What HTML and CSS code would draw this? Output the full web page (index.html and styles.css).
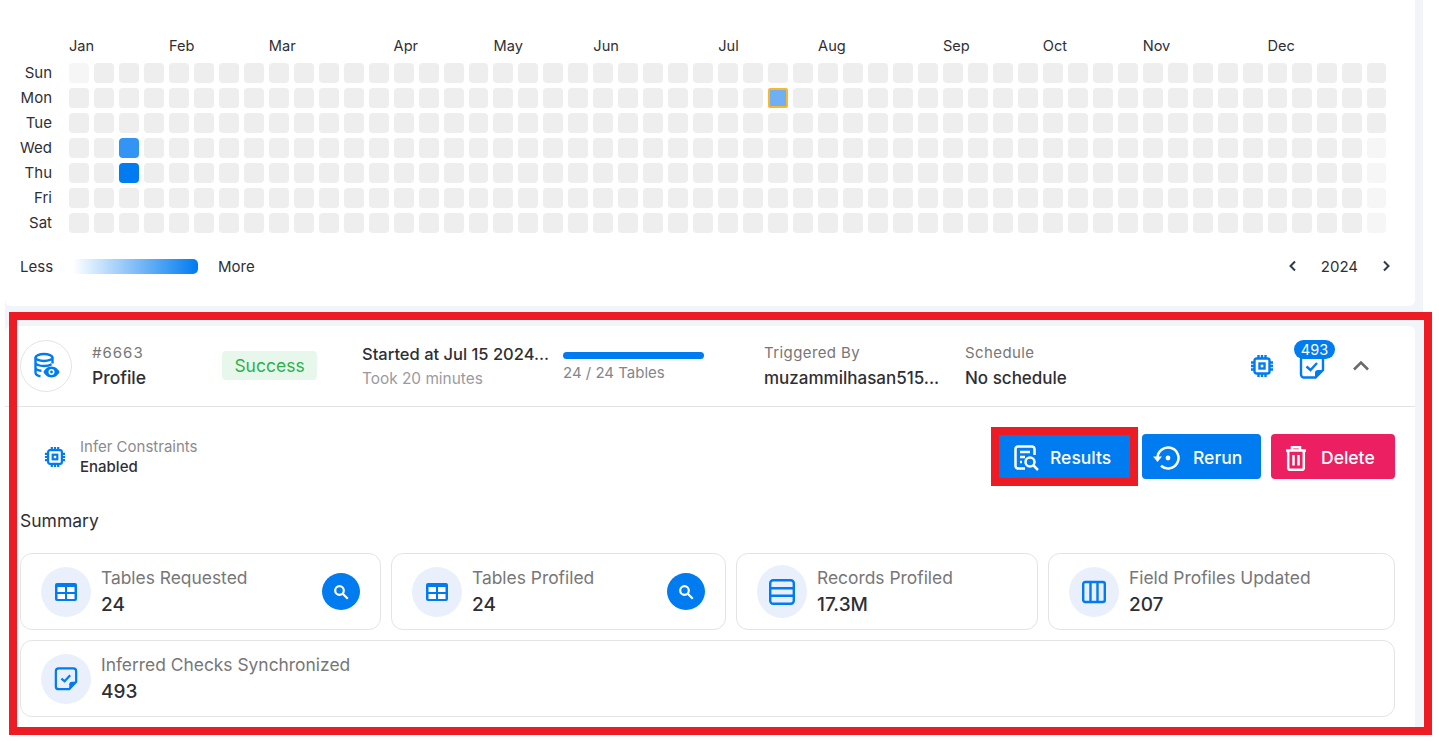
FILE: index.html
```html
<!DOCTYPE html>
<html lang="en">
<head>
<meta charset="utf-8">
<title>Profile operation</title>
<link rel="stylesheet" href="styles.css">
</head>
<body>
<main class="page">
  <section class="calendar">
    <div class="heat">
      <div class="days">
        <span>Sun</span><span>Mon</span><span>Tue</span><span>Wed</span><span>Thu</span><span>Fri</span><span>Sat</span>
      </div>
      <div class="plot">
        <div class="months">
          <span class="m0">Jan</span><span class="m4">Feb</span><span class="m8">Mar</span><span class="m13">Apr</span><span class="m17">May</span><span class="m21">Jun</span><span class="m26">Jul</span><span class="m30">Aug</span><span class="m35">Sep</span><span class="m39">Oct</span><span class="m43">Nov</span><span class="m48">Dec</span>
        </div>
        <div class="cells">
          <i class="off"></i><i></i><i></i><i></i><i></i><i></i><i></i><i></i><i></i><i></i>
          <i></i><i></i><i></i><i></i><i></i><i></i><i></i><i></i><i></i><i></i>
          <i></i><i></i><i></i><i></i><i></i><i></i><i></i><i></i><i></i><i></i>
          <i></i><i></i><i></i><i></i><i></i><i></i><i></i><i></i><i></i><i></i>
          <i></i><i></i><i></i><i></i><i></i><i></i><i></i><i></i><i></i><i></i>
          <i></i><i></i><i></i>

          <i></i><i></i><i></i><i></i><i></i><i></i><i></i><i></i><i></i><i></i>
          <i></i><i></i><i></i><i></i><i></i><i></i><i></i><i></i><i></i><i></i>
          <i></i><i></i><i></i><i></i><i></i><i></i><i></i><i></i><i class="picked"></i><i></i>
          <i></i><i></i><i></i><i></i><i></i><i></i><i></i><i></i><i></i><i></i>
          <i></i><i></i><i></i><i></i><i></i><i></i><i></i><i></i><i></i><i></i>
          <i></i><i></i><i></i>

          <i></i><i></i><i></i><i></i><i></i><i></i><i></i><i></i><i></i><i></i>
          <i></i><i></i><i></i><i></i><i></i><i></i><i></i><i></i><i></i><i></i>
          <i></i><i></i><i></i><i></i><i></i><i></i><i></i><i></i><i></i><i></i>
          <i></i><i></i><i></i><i></i><i></i><i></i><i></i><i></i><i></i><i></i>
          <i></i><i></i><i></i><i></i><i></i><i></i><i></i><i></i><i></i><i></i>
          <i></i><i></i><i></i>

          <i></i><i></i><i class="mid"></i><i></i><i></i><i></i><i></i><i></i><i></i><i></i>
          <i></i><i></i><i></i><i></i><i></i><i></i><i></i><i></i><i></i><i></i>
          <i></i><i></i><i></i><i></i><i></i><i></i><i></i><i></i><i></i><i></i>
          <i></i><i></i><i></i><i></i><i></i><i></i><i></i><i></i><i></i><i></i>
          <i></i><i></i><i></i><i></i><i></i><i></i><i></i><i></i><i></i><i></i>
          <i></i><i></i><i class="off"></i>

          <i></i><i></i><i class="high"></i><i></i><i></i><i></i><i></i><i></i><i></i><i></i>
          <i></i><i></i><i></i><i></i><i></i><i></i><i></i><i></i><i></i><i></i>
          <i></i><i></i><i></i><i></i><i></i><i></i><i></i><i></i><i></i><i></i>
          <i></i><i></i><i></i><i></i><i></i><i></i><i></i><i></i><i></i><i></i>
          <i></i><i></i><i></i><i></i><i></i><i></i><i></i><i></i><i></i><i></i>
          <i></i><i></i><i class="off"></i>

          <i></i><i></i><i></i><i></i><i></i><i></i><i></i><i></i><i></i><i></i>
          <i></i><i></i><i></i><i></i><i></i><i></i><i></i><i></i><i></i><i></i>
          <i></i><i></i><i></i><i></i><i></i><i></i><i></i><i></i><i></i><i></i>
          <i></i><i></i><i></i><i></i><i></i><i></i><i></i><i></i><i></i><i></i>
          <i></i><i></i><i></i><i></i><i></i><i></i><i></i><i></i><i></i><i></i>
          <i></i><i></i><i class="off"></i>

          <i></i><i></i><i></i><i></i><i></i><i></i><i></i><i></i><i></i><i></i>
          <i></i><i></i><i></i><i></i><i></i><i></i><i></i><i></i><i></i><i></i>
          <i></i><i></i><i></i><i></i><i></i><i></i><i></i><i></i><i></i><i></i>
          <i></i><i></i><i></i><i></i><i></i><i></i><i></i><i></i><i></i><i></i>
          <i></i><i></i><i></i><i></i><i></i><i></i><i></i><i></i><i></i><i></i>
          <i></i><i></i><i class="off"></i>
        </div>
      </div>
    </div>
    <div class="legend">
      <span>Less</span>
      <span class="ramp"></span>
      <span>More</span>
      <div class="year">
        <svg class="nav" viewBox="0 0 12 12"><path d="M8 1.500 3.500 6 8 10.500"/></svg>
        <span>2024</span>
        <svg class="nav" viewBox="0 0 12 12"><path d="M4 1.500 8.500 6 4 10.500"/></svg>
      </div>
    </div>
  </section>

  <section class="run">
    <header class="run-head">
      <div class="avatar">
        <svg viewBox="0 0 28 28" class="ico-db"><ellipse cx="12" cy="5.500" rx="8.500" ry="3.500" class="ln"/><path class="ln" d="M3.500 5.500v15c0 2 2 3.300 5 3.700M20.500 5.500v6M3.500 10.500c0 2 3.800 3.500 8.500 3.500 3.200 0 6-.7 7.500-1.800M3.500 15.500c0 1.700 2.400 3 6 3.400"/><path class="fill" d="M19.500 14.500c-4 0-7 3-8 5.500 1 2.500 4 5.500 8 5.500s7-3 8-5.500c-1-2.500-4-5.500-8-5.500Z"/><circle cx="19.500" cy="20" r="3" fill="#fff"/><circle cx="19.500" cy="20" r="1.400" class="fill"/></svg>
      </div>
      <div class="col-id">
        <span class="id">#6663</span>
        <strong>Profile</strong>
      </div>
      <span class="badge-ok">Success</span>
      <div class="col-time">
        <strong>Started at Jul 15 2024...</strong>
        <span>Took 20 minutes</span>
      </div>
      <div class="col-prog">
        <span class="bar"></span>
        <span>24 / 24 Tables</span>
      </div>
      <div class="col-by">
        <span>Triggered By</span>
        <strong>muzammilhasan515...</strong>
      </div>
      <div class="col-sched">
        <span>Schedule</span>
        <strong>No schedule</strong>
      </div>
      <div class="head-icons">
        <svg class="ico-chip" viewBox="0 0 24 24"><rect x="4.500" y="4.500" width="15" height="15" rx="2" class="ln"/><rect x="9.500" y="9.500" width="5" height="5" class="ln"/><path class="ln" d="M8.500 1v3M12 1v3M15.500 1v3M8.500 20v3M12 20v3M15.500 20v3M1 8.500h3M1 12h3M1 15.500h3M20 8.500h3M20 12h3M20 15.500h3"/></svg>
        <div class="checks">
          <svg viewBox="0 0 26 24"><path class="ln" d="M5 1.500h16a3 3 0 0 1 3 3V15l-7.500 7.500H5a3 3 0 0 1-3-3v-15a3 3 0 0 1 3-3Z"/><path class="fill" d="M16 22.500V18a3 3 0 0 1 3-3h5Z"/><path class="ln" d="m7.500 11.500 4 3.500 6.500-7"/></svg>
          <span class="count">493</span>
        </div>
        <svg class="ico-up" viewBox="0 0 24 24"><path d="M5 15.500 12 8.500l7 7"/></svg>
      </div>
    </header>

    <div class="run-actions">
      <div class="infer">
        <svg class="ico-chip" viewBox="0 0 24 24"><rect x="4.500" y="4.500" width="15" height="15" rx="2" class="ln"/><rect x="9.500" y="9.500" width="5" height="5" class="ln"/><path class="ln" d="M8.500 1v3M12 1v3M15.500 1v3M8.500 20v3M12 20v3M15.500 20v3M1 8.500h3M1 12h3M1 15.500h3M20 8.500h3M20 12h3M20 15.500h3"/></svg>
        <div class="infer-text">
          <span>Infer Constraints</span>
          <strong>Enabled</strong>
        </div>
      </div>
      <div class="buttons">
        <button class="btn btn-results">
          <svg viewBox="0 0 26 26"><path d="M12 23.500H5a2.500 2.500 0 0 1-2.500-2.500V4A2.500 2.500 0 0 1 5 1.500h14A2.500 2.500 0 0 1 21.500 4v6"/><path d="M7 7h10M7 12h5M7 17h2"/><circle cx="17" cy="17" r="4.500"/><path d="m20.500 20.500 4.500 4.500"/></svg>
          Results
        </button>
        <button class="btn btn-rerun">
          <svg viewBox="0 0 28 26"><path d="M4.500 13a10.500 10.500 0 1 1 3.500 7.800"/><path class="solid" d="M0 11.500h9L4.500 17Z"/><circle class="solid" cx="15" cy="13" r="2.400"/></svg>
          Rerun
        </button>
        <button class="btn btn-delete">
          <svg viewBox="0 0 20 25"><path d="M0 4.500h20M6 4V1.200h8V4M2.200 4.500v17.800a1.500 1.500 0 0 0 1.500 1.500h12.600a1.500 1.500 0 0 0 1.500-1.500V4.500M7.500 9v10.500M12.500 9v10.500"/></svg>
          Delete
        </button>
      </div>
    </div>

    <h2 class="summary">Summary</h2>

    <div class="stats">
      <article class="stat">
        <span class="disc"><svg viewBox="0 0 24 24"><rect x="1" y="3" width="22" height="18" rx="2" class="fill"/><path fill="#fff" d="M3.500 7h7.500v5H3.500zM13 7h7.500v5H13zM3.500 14H11v5H3.500zM13 14h7.500v5H13z"/></svg></span>
        <div class="stat-text"><span>Tables Requested</span><strong>24</strong></div>
        <span class="find"><svg viewBox="0 0 16 16"><circle cx="6.500" cy="6.500" r="4.300"/><path d="m9.800 9.800 5 5"/></svg></span>
      </article>
      <article class="stat">
        <span class="disc"><svg viewBox="0 0 24 24"><rect x="1" y="3" width="22" height="18" rx="2" class="fill"/><path fill="#fff" d="M3.500 7h7.500v5H3.500zM13 7h7.500v5H13zM3.500 14H11v5H3.500zM13 14h7.500v5H13z"/></svg></span>
        <div class="stat-text"><span>Tables Profiled</span><strong>24</strong></div>
        <span class="find"><svg viewBox="0 0 16 16"><circle cx="6.500" cy="6.500" r="4.300"/><path d="m9.800 9.800 5 5"/></svg></span>
      </article>
      <article class="stat">
        <span class="disc disc-lg"><svg viewBox="0 0 26 26"><rect x="1.200" y="1.200" width="23.600" height="23.600" rx="3" class="ln"/><path class="ln" d="M1.200 9.300h23.600M1.200 16.700h23.600"/></svg></span>
        <div class="stat-text"><span>Records Profiled</span><strong>17.3M</strong></div>
      </article>
      <article class="stat">
        <span class="disc"><svg viewBox="0 0 24 24"><rect x="1.200" y="2" width="21.600" height="20" rx="2" class="ln"/><path class="ln" d="M8.500 2v20M15.500 2v20"/></svg></span>
        <div class="stat-text"><span>Field Profiles Updated</span><strong>207</strong></div>
      </article>
      <article class="stat stat-wide">
        <span class="disc"><svg viewBox="0 0 26 26"><path class="ln" d="M5 1.500h16a3 3 0 0 1 3 3V16l-7.500 8H5a3 3 0 0 1-3-3V4.500a3 3 0 0 1 3-3Z"/><path class="fill" d="M16.500 24v-5a3 3 0 0 1 3-3H24Z"/><path class="ln" d="m8 12.500 3.500 3 6-6.500"/></svg></span>
        <div class="stat-text"><span>Inferred Checks Synchronized</span><strong>493</strong></div>
      </article>
    </div>
  </section>

  <div class="mark mark-run"></div>
  <div class="mark mark-results"></div>
</main>
</body>
</html>
```
FILE: styles.css
```css
* { box-sizing: border-box; }
html, body { margin: 0; height: 100%; background: #fff; overflow: hidden; }
body { font-family: Inter, "Noto Sans", sans-serif; color: #2f2f33; }

.page {
  position: relative;
  margin-left: 5px;
  width: 1418px;
  height: 730px;
  padding-right: 8px;
  background: #f1f5f9;
  display: flex;
  flex-direction: column;
  gap: 20px;
}

svg { display: block; flex: none; }
.ln { fill: none; stroke: #007bf0; stroke-width: 2.400; }
.fill { fill: #007bf0; }

/* calendar */
.calendar {
  height: 306px;
  background: #fff;
  border-radius: 0 0 6px 6px;
  padding-top: 36px;
}
.heat { display: flex; }
.days {
  width: 47px;
  margin-right: 17px;
  padding-top: 27px;
  display: flex;
  flex-direction: column;
  gap: 5px;
  text-align: right;
  font-size: 15px;
}
.days span { height: 20px; line-height: 20px; }
.months {
  display: grid;
  grid-template-columns: repeat(53, 24.98px);
  height: 20px;
  line-height: 20px;
  font-size: 14.600px;
  margin-bottom: 7px;
}
.m0 { grid-column: 1 / span 4; }
.m4 { grid-column: 5 / span 4; }
.m8 { grid-column: 9 / span 5; }
.m13 { grid-column: 14 / span 4; }
.m17 { grid-column: 18 / span 4; }
.m21 { grid-column: 22 / span 5; }
.m26 { grid-column: 27 / span 4; }
.m30 { grid-column: 31 / span 5; }
.m35 { grid-column: 36 / span 4; }
.m39 { grid-column: 40 / span 4; }
.m43 { grid-column: 44 / span 5; }
.m48 { grid-column: 49 / span 5; }
.cells {
  display: grid;
  grid-template-columns: repeat(52, 19.98px) 19px;
  grid-auto-rows: 20px;
  column-gap: 5px;
  row-gap: 5px;
}
.cells i { display: block; background: #eeeeee; border-radius: 4px; }
.cells i.off { background: #f6f6f6; }
.cells i.mid { background: #3295f5; }
.cells i.high { background: #007bf0; }
.cells i.picked { background: #6eb0f3; border: 2px solid #fbb72c; border-radius: 2px; }

.legend {
  display: flex;
  align-items: center;
  height: 20px;
  margin-top: 23px;
  padding-left: 15px;
  font-size: 15px;
}
.ramp {
  width: 125px;
  height: 15px;
  margin: 0 20px;
  border-radius: 0 5px 5px 0;
  background: linear-gradient(90deg, #fff, #007bf0);
}
.year {
  margin-left: auto;
  margin-right: 23px;
  display: flex;
  align-items: center;
  gap: 22px;
}
.nav { width: 12px; height: 12px; fill: none; stroke: #2f3a4a; stroke-width: 2; }

/* run card */
.run {
  flex: 1;
  background: #fff;
  border-radius: 6px 6px 0 0;
}
.run-head {
  height: 81px;
  display: flex;
  align-items: center;
  padding-left: 15px;
  border-bottom: 1px solid #e4e4e4;
}
.avatar {
  width: 52px;
  height: 52px;
  border: 1px solid #e3e5e8;
  border-radius: 50%;
  display: flex;
  align-items: center;
  justify-content: center;
}
.ico-db { width: 28px; height: 28px; }
.col-id, .col-time, .col-prog, .col-by, .col-sched { display: flex; flex-direction: column; flex: none; }
.col-id { width: 130px; margin-left: 20px; gap: 5px; padding-top: 1px; }
.id { font-size: 15px; line-height: 18px; color: #777; letter-spacing: 1px; }
.col-id strong { font-size: 17.500px; font-weight: 500; line-height: 22px; }
.badge-ok {
  width: 95px;
  height: 29px;
  line-height: 29px;
  margin-top: -2px;
  text-align: center;
  font-size: 17.500px;
  color: #2db14d;
  background: #e8f7ec;
  border-radius: 4px;
}
.col-time { width: 190px; margin-left: 45px; gap: 6px; }
.col-time strong {
  font-size: 16.500px;
  font-weight: 500;
  line-height: 20px;
  white-space: nowrap;
}
.col-time span { font-size: 15.400px; line-height: 18px; color: #9a9a9f; }
.col-prog { width: 141px; margin-left: 11px; font-size: 15px; line-height: 18px; color: #85858a; margin-top: 1px; }
.bar { display: block; height: 7px; margin-bottom: 5px; border-radius: 4px; background: #007bf0; }
.col-by { width: 177px; margin-left: 60px; gap: 6px; }
.col-sched { margin-left: 24px; gap: 6px; }
.col-by span, .col-sched span { font-size: 15px; line-height: 18px; color: #777; letter-spacing: .4px; }
.col-by strong, .col-sched strong {
  font-size: 17px;
  font-weight: 500;
  line-height: 20px;
  white-space: nowrap;
}
.head-icons {
  margin-left: auto;
  padding-right: 42px;
  display: flex;
  align-items: center;
  gap: 25px;
}
.head-icons .ico-chip { width: 24px; height: 24px; }
.checks { position: relative; width: 26px; height: 24px; margin-top: 1px; }
.checks svg { width: 26px; height: 24px; }
.count {
  position: absolute;
  left: -5px;
  top: -15px;
  width: 41px;
  height: 19px;
  line-height: 19px;
  border-radius: 10px;
  background: #007bf0;
  color: #fff;
  font-size: 14.500px;
  text-align: center;
}
.ico-up { width: 24px; height: 24px; margin-left: -1px; fill: none; stroke: #6b6b6b; stroke-width: 2.600; }

.run-actions {
  display: flex;
  align-items: center;
  justify-content: space-between;
  padding: 27px 20px 0 39px;
}
.infer { display: flex; align-items: center; gap: 14px; }
.infer .ico-chip { width: 22px; height: 22px; }
.infer-text { display: flex; flex-direction: column; gap: 2px; font-size: 15px; line-height: 18px; }
.infer-text span { color: #8b8b8f; }
.infer-text strong { font-weight: 500; }
.buttons { display: flex; gap: 10px; }
.btn {
  height: 45px;
  display: flex;
  align-items: center;
  border: 0;
  border-radius: 4px;
  background: #007bf0;
  color: #fff;
  font: 500 17.500px/24px Inter, "Noto Sans", sans-serif;
  padding-top: 3px;
  padding-bottom: 0;
}
.btn svg { fill: none; stroke: #fff; stroke-width: 2.500; }
.btn svg .solid { fill: #fff; stroke: none; }
.btn-results { width: 135px; padding-left: 16px; gap: 11px; }
.btn-results svg { width: 26px; height: 26px; }
.btn-rerun { width: 119px; padding-left: 11px; gap: 12px; }
.btn-rerun svg { width: 28px; height: 26px; }
.btn-delete { width: 124px; padding-left: 15px; gap: 15px; background: #ec1f62; }
.btn-delete svg { width: 20px; height: 25px; }

.summary {
  margin: 30px 0 20px 15px;
  font-size: 17.500px;
  font-weight: 400;
  line-height: 24px;
}

.stats {
  margin: 0 20px 0 15px;
  display: grid;
  grid-template-columns: 361px 335px 302px 347px;
  gap: 10px;
}
.stat {
  height: 77px;
  display: flex;
  align-items: center;
  padding: 0 20px;
  border: 1px solid #e4e4e4;
  border-radius: 12px;
}
.stat-wide { grid-column: 1 / -1; }
.disc {
  width: 50px;
  height: 50px;
  flex: none;
  border-radius: 50%;
  background: #e9f0fb;
  display: flex;
  align-items: center;
  justify-content: center;
}
.disc-lg { height: 53px; }
.disc svg { width: 24px; height: 24px; }
.disc-lg svg { width: 26px; height: 26px; }
.stat-text { display: flex; flex-direction: column; margin-left: 10px; gap: 4px; }
.stat-text span { font-size: 17.400px; line-height: 22px; color: #777; }
.stat-text strong { font-size: 19px; font-weight: 500; line-height: 24px; }
.find {
  margin-left: auto;
  width: 38px;
  height: 37px;
  border-radius: 50%;
  background: #007bf0;
  display: flex;
  align-items: center;
  justify-content: center;
}
.find svg { width: 16px; height: 16px; fill: none; stroke: #fff; stroke-width: 2.200; }

/* annotation frames laid over the screenshot */
.mark { position: absolute; border: 8px solid #ed1c24; pointer-events: none; }
.mark-run { left: 4px; top: 312px; width: 1423px; height: 423px; }
.mark-results { left: 986px; top: 427px; width: 147px; height: 59px; }
```
